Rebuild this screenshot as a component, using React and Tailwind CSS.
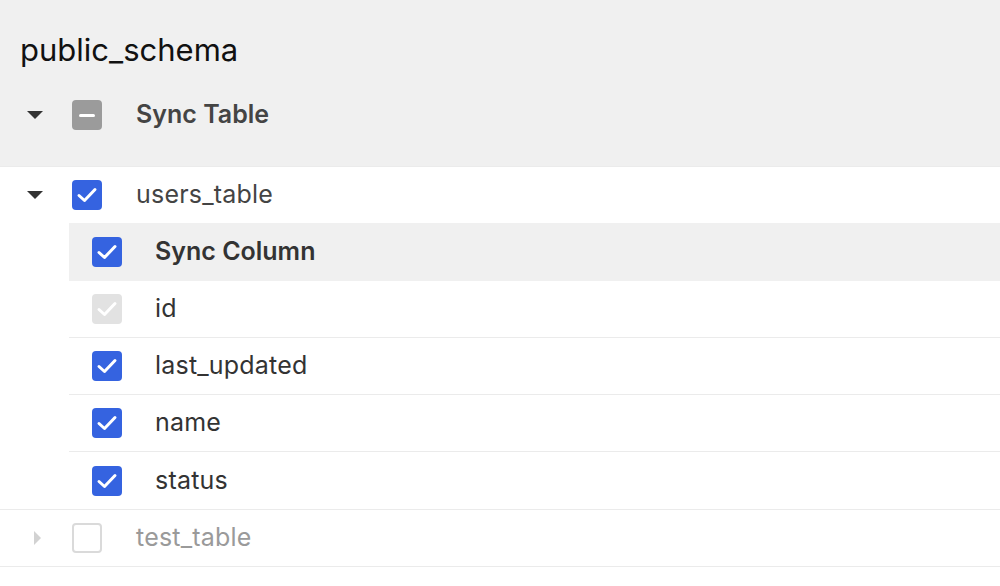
import { useState } from 'react'

// Albero di sincronizzazione: schema > tabelle > colonne, con caselle a tre stati.
const FONT = { fontFamily: 'Inter, "Noto Sans", sans-serif' }

function Caret({ open, muted }) {
  return (
    <span className="flex h-full w-[72px] shrink-0 items-center pl-[25px]">
      {open ? (
        <svg width="20" height="10" viewBox="0 0 20 10">
          <path d="M2 1 L18 1 L10 9 Z" fill="#333" />
        </svg>
      ) : (
        <svg width="20" height="16" viewBox="0 0 20 16" className="ml-[2px]">
          <path d="M7 1 L14 8 L7 15 Z" fill={muted ? '#d2d2d2' : '#333'} />
        </svg>
      )}
    </span>
  )
}

function Box({ state }) {
  if (state === 'empty')
    return <span className="block h-[30px] w-[30px] shrink-0 rounded-[4px] border-2 border-[#dadada] bg-white" />
  if (state === 'mixed')
    return (
      <span className="flex h-[30px] w-[30px] shrink-0 items-center justify-center rounded-[4px] bg-[#9b9b9b]">
        <span className="block h-[3px] w-[16px] rounded bg-white" />
      </span>
    )
  const bg = state === 'disabled' ? 'bg-[#e2e2e2]' : 'bg-[#3563e0]'
  return (
    <span className={`flex h-[30px] w-[30px] shrink-0 items-center justify-center rounded-[4px] ${bg}`}>
      <svg width="22" height="18" viewBox="0 0 22 18">
        <path d="M3 9.5 L8.5 14.5 L19 3.5" fill="none" stroke="white" strokeWidth="3" strokeLinecap="round" strokeLinejoin="round" />
      </svg>
    </span>
  )
}

const COLUMNS = [
  { name: 'id', locked: true },
  { name: 'last_updated' },
  { name: 'name' },
  { name: 'status' },
]

export default function App() {
  const [cols] = useState(COLUMNS)

  return (
    <div className="min-h-[586px] w-[1000px] overflow-hidden bg-white" style={FONT}>
      <div className="h-[167px] border-b border-[#ebebeb] bg-[#f0f0f0] pt-[30px]">
        <div className="pl-[20px] text-[31px] leading-[40px] text-[#111]">public_schema</div>
        <div className="mt-[16px] flex h-[58px] items-center">
          <Caret open />
          <Box state="mixed" />
          <span className="pl-[34px] text-[25px] font-semibold text-[#444]">Sync Table</span>
        </div>
      </div>

      <div className="border-b border-[#ebebeb]">
        <div className="flex h-[56px] items-center">
          <Caret open />
          <Box state="checked" />
          <span className="pl-[34px] text-[25px] tracking-[0.2px] text-[#444]">users_table</span>
        </div>
        <div className="ml-[69px]">
          <div className="flex h-[58px] items-center bg-[#f0f0f0] pl-[23px]">
            <Box state="checked" />
            <span className="pl-[33px] text-[25px] font-semibold text-[#333]">Sync Column</span>
          </div>
          {cols.map((c, i) => (
            <div
              key={c.name}
              className={`flex h-[57px] items-center pl-[23px] ${i < cols.length - 1 ? 'border-b border-[#ebebeb]' : ''}`}
            >
              <Box state={c.locked ? 'disabled' : 'checked'} />
              <span className="pl-[33px] text-[25px] tracking-[0.2px] text-[#333]">{c.name}</span>
            </div>
          ))}
        </div>
      </div>

      <div className="flex h-[57px] items-center border-b border-[#ebebeb]">
        <Caret muted />
        <Box state="empty" />
        <span className="pl-[34px] text-[25px] tracking-[0.2px] text-[#9a9a9a]">test_table</span>
      </div>
    </div>
  )
}
